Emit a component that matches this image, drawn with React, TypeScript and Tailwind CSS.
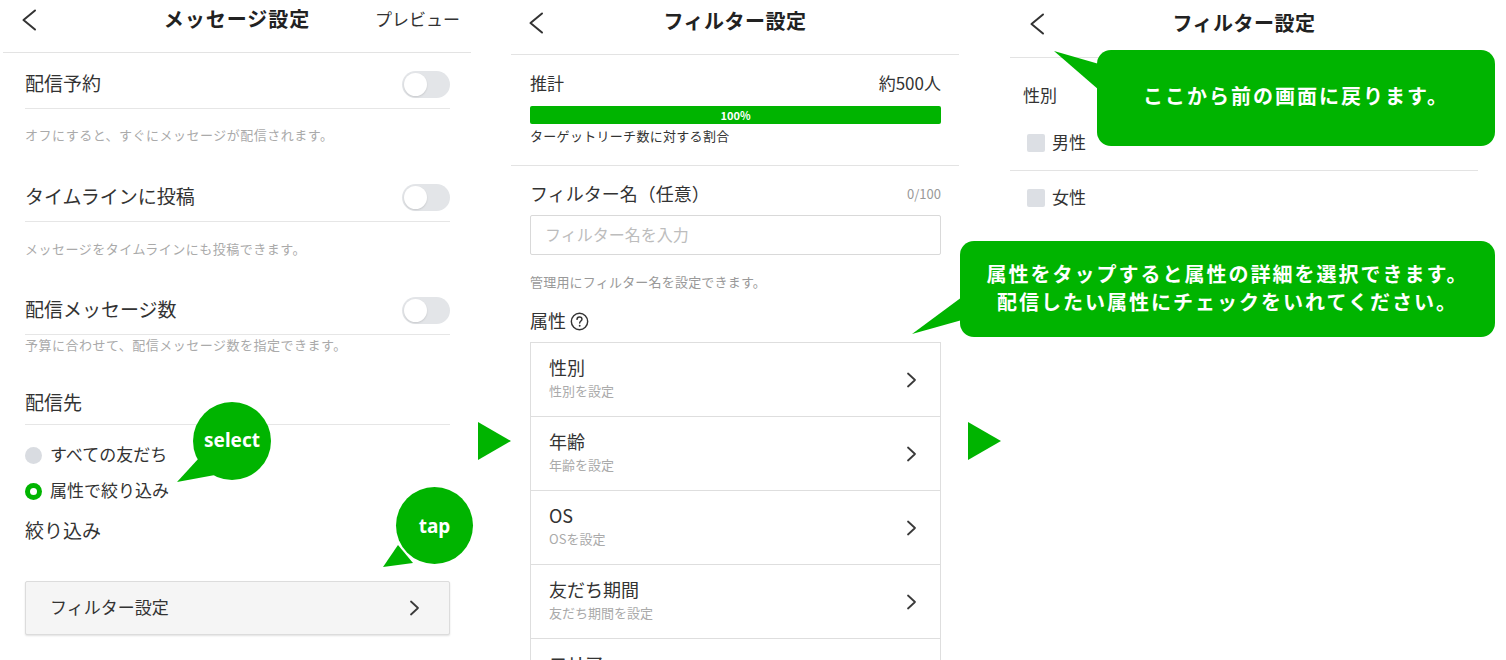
import React from 'react';

const Back = () => (
  <svg width="16" height="22" viewBox="0 0 16 22" className="block">
    <path d="M14 1.5 L2.5 11 L14 20.5" fill="none" stroke="#333" strokeWidth="2" strokeLinecap="round" strokeLinejoin="round" />
  </svg>
);

const Chevron = () => (
  <svg width="11" height="16" viewBox="0 0 11 16" className="block shrink-0">
    <path d="M2 1.5 L9 8 L2 14.5" fill="none" stroke="#3a3a3a" strokeWidth="1.8" strokeLinecap="round" strokeLinejoin="round" />
  </svg>
);

const Toggle = () => (
  <div className="flex h-[27px] w-[48px] items-center rounded-full bg-[#e3e5e8] px-[2px]">
    <div className="h-[23px] w-[23px] rounded-full bg-white shadow-[0_1px_2px_rgba(0,0,0,0.12)]" />
  </div>
);

const Arrow = () => (
  <svg width="33" height="38" viewBox="0 0 33 38" className="block">
    <polygon points="0,0 33,19 0,38" fill="#00b400" />
  </svg>
);

const HelpIcon = () => (
  <svg width="19" height="19" viewBox="0 0 20 20" className="block">
    <circle cx="10" cy="10" r="8.6" fill="none" stroke="#333" strokeWidth="1.5" />
    <path d="M7.4 7.8 C7.4 6.2 8.6 5.3 10 5.3 C11.5 5.3 12.6 6.3 12.6 7.6 C12.6 9.4 10.2 9.5 10.2 11.6" fill="none" stroke="#333" strokeWidth="1.5" strokeLinecap="round" />
    <circle cx="10.2" cy="14.4" r="1" fill="#333" />
  </svg>
);

const listItems: [string, string][] = [
  ['性別', '性別を設定'],
  ['年齢', '年齢を設定'],
  ['OS', 'OSを設定'],
  ['友だち期間', '友だち期間を設定'],
  ['エリア', 'エリアを設定'],
];

export default function App() {
  return (
    <div className="relative h-[660px] w-[1506px] overflow-hidden bg-white font-['Noto_Sans_CJK_JP','Noto_Sans',sans-serif] text-[#333]">
      <div className="flex items-start">
        {/* Left panel */}
        <div className="ml-[3px] w-[468px] shrink-0">
          <div className="grid h-[53px] grid-cols-[1fr_auto_1fr] items-start border-b border-[#e3e3e3] pt-[7px]">
            <div className="pl-[18px] pt-[2px]"><Back /></div>
            <div className="text-[20px] font-bold leading-[24px] tracking-[1px] text-[#222]">メッセージ設定</div>
            <div className="flex justify-end pr-[11px] text-[17px] leading-[24px] text-[#333]">プレビュー</div>
          </div>
          <div className="pl-[22px] pr-[21px]">
            <div className="mt-[8px] flex h-[48px] items-center justify-between border-b border-[#e6e6e6]">
              <span className="pb-[3px] text-[19px] leading-[26px]">配信予約</span>
              <Toggle />
            </div>
            <div className="mt-[16px] text-[13px] leading-[20px] tracking-[0.5px] text-[#aaa]">オフにすると、すぐにメッセージが配信されます。</div>
            <div className="mt-[29px] flex h-[48px] items-center justify-between border-b border-[#e6e6e6]">
              <span className="pb-[3px] text-[19px] leading-[26px]">タイムラインに投稿</span>
              <Toggle />
            </div>
            <div className="mt-[17px] text-[13px] leading-[20px] tracking-[0.5px] text-[#aaa]">メッセージをタイムラインにも投稿できます。</div>
            <div className="mt-[28px] flex h-[48px] items-center justify-between border-b border-[#e6e6e6]">
              <span className="pb-[3px] text-[19px] leading-[26px]">配信メッセージ数</span>
              <Toggle />
            </div>
            <div className="text-[13px] leading-[20px] tracking-[0.5px] text-[#aaa]">予算に合わせて、配信メッセージ数を指定できます。</div>
            <div className="mt-[22px] flex h-[48px] items-center border-b border-[#e6e6e6] pt-[3px]">
              <span className="text-[19px] leading-[26px]">配信先</span>
            </div>
            <div className="mt-[16px] flex h-[28px] items-center gap-[8px]">
              <div className="h-[17px] w-[17px] rounded-full bg-[#d9dce1]" />
              <span className="pb-[2px] text-[17px] leading-[24px]">すべての友だち</span>
            </div>
            <div className="mt-[8px] flex h-[28px] items-center gap-[8px]">
              <div className="flex h-[17px] w-[17px] items-center justify-center rounded-full bg-[#00b400]">
                <div className="h-[7px] w-[7px] rounded-full bg-white" />
              </div>
              <span className="pb-[2px] text-[17px] leading-[24px]">属性で絞り込み</span>
            </div>
            <div className="mt-[11px] text-[19px] leading-[28px]">絞り込み</div>
            <div className="mt-[37px] flex h-[54px] items-center justify-between rounded-[2px] border border-[#dcdcdc] bg-[#f5f5f5] pl-[24px] pr-[29px] shadow-[0_1px_2px_rgba(0,0,0,0.12)]">
              <span className="pb-[2px] text-[17px] leading-[24px]">フィルター設定</span>
              <Chevron />
            </div>
          </div>
        </div>

        <div className="ml-[7px] mt-[422px] shrink-0"><Arrow /></div>

        {/* Middle panel */}
        <div className="w-[448px] shrink-0">
          <div className="grid h-[55px] grid-cols-[1fr_auto_1fr] items-start border-b border-[#e3e3e3] pt-[9px]">
            <div className="pl-[17px] pt-[3px]"><Back /></div>
            <div className="text-[20px] font-bold leading-[24px] tracking-[0.5px] text-[#222]">フィルター設定</div>
            <div />
          </div>
          <div className="border-b border-[#e3e3e3] pb-[19px] pl-[19px] pr-[18px]">
            <div className="mt-[16px] flex items-center justify-between text-[17px] leading-[24px]">
              <span>推計</span>
              <span>約500人</span>
            </div>
            <div className="mt-[11px] flex h-[18px] items-center justify-center rounded-[2px] bg-[#00b400] text-[11px] font-semibold leading-[18px] text-white">100%</div>
            <div className="mt-[2px] text-[13px] leading-[20px] tracking-[0.3px]">ターゲットリーチ数に対する割合</div>
          </div>
          <div className="pl-[19px] pr-[18px]">
            <div className="mt-[14px] flex items-end justify-between">
              <span className="text-[18px] leading-[26px]">フィルター名（任意）</span>
              <span className="pb-[4px] text-[13px] leading-[16px] text-[#999]">0/100</span>
            </div>
            <div className="mt-[9px] flex h-[40px] items-center rounded-[2px] border border-[#d9d9d9] pb-[2px] pl-[14px] text-[16px] text-[#bdbdbd]">フィルター名を入力</div>
            <div className="mt-[17px] text-[13px] leading-[20px] tracking-[0.2px] text-[#999]">管理用にフィルター名を設定できます。</div>
            <div className="mt-[15px] flex items-center gap-[4px]">
              <span className="pb-[2px] text-[18px] leading-[26px]">属性</span>
              <HelpIcon />
            </div>
            <div className="mt-[7px] border-x border-t border-[#dedede]">
              {listItems.map(([t, s]) => (
                <div key={t} className="flex h-[74px] items-center justify-between border-b border-[#dedede] pl-[18px] pr-[23px]">
                  <div className="flex flex-col pb-[5px]">
                    <span className="text-[18px] leading-[24px]">{t}</span>
                    <span className="mt-[3px] text-[13px] leading-[18px] text-[#aaa]">{s}</span>
                  </div>
                  <Chevron />
                </div>
              ))}
            </div>
          </div>
        </div>

        <div className="ml-[9px] mt-[422px] shrink-0"><Arrow /></div>

        {/* Right panel */}
        <div className="ml-[9px] w-[468px] shrink-0">
          <div className="grid h-[58px] grid-cols-[1fr_auto_1fr] items-start border-b border-[#e3e3e3] pt-[11px]">
            <div className="pl-[19px] pt-[2px]"><Back /></div>
            <div className="text-[20px] font-bold leading-[24px] tracking-[0.5px] text-[#222]">フィルター設定</div>
            <div />
          </div>
          <div className="mt-[25px] pl-[13px] text-[17px] leading-[24px]">性別</div>
          <div className="mt-[22px] flex h-[42px] items-start gap-[7px] border-b border-[#e3e3e3] pl-[17px]">
            <div className="mt-[5px] h-[18px] w-[18px] rounded-[2px] bg-[#dcdfe4]" />
            <span className="text-[17px] leading-[26px]">男性</span>
          </div>
          <div className="mt-[13px] flex h-[28px] items-center gap-[7px] pl-[17px]">
            <div className="h-[18px] w-[18px] rounded-[2px] bg-[#dcdfe4]" />
            <span className="pb-[2px] text-[17px] leading-[26px]">女性</span>
          </div>
        </div>
      </div>

      {/* select bubble */}
      <div className="absolute left-[175px] top-[402px] h-[82px] w-[96px]">
        <svg width="96" height="82" viewBox="0 0 96 82" className="absolute left-0 top-0">
          <circle cx="57" cy="39" r="39" fill="#00b400" />
          <polygon points="2,80 24,56 40,73" fill="#00b400" />
        </svg>
        <div className="absolute left-[18px] top-0 flex h-[78px] w-[78px] items-center justify-center pb-[2px] font-['Noto_Sans',sans-serif] text-[19px] font-bold text-white">select</div>
      </div>

      {/* tap bubble */}
      <div className="absolute left-[381px] top-[487px] h-[82px] w-[93px]">
        <svg width="93" height="82" viewBox="0 0 93 82" className="absolute left-0 top-0">
          <circle cx="53.5" cy="38.5" r="38.5" fill="#00b400" />
          <polygon points="2,80 17,58 32,76" fill="#00b400" />
        </svg>
        <div className="absolute left-[15px] top-0 flex h-[77px] w-[77px] items-center justify-center pt-[1px] font-['Noto_Sans',sans-serif] text-[19px] font-bold text-white">tap</div>
      </div>

      {/* callout 1 */}
      <div className="absolute left-[1097px] top-[50px] flex h-[96px] w-[398px] items-center justify-center rounded-[14px] bg-[#00b400] pb-[5px] text-[20px] font-bold tracking-[2px] text-white">
        <svg width="46" height="42" viewBox="0 0 46 42" className="absolute left-[-44px] top-0">
          <polygon points="1,1 46,14 46,40" fill="#00b400" />
        </svg>
        ここから前の画面に戻ります。
      </div>

      {/* callout 2 */}
      <div className="absolute left-[960px] top-[241px] flex h-[96px] w-[535px] flex-col items-center justify-center rounded-[14px] bg-[#00b400] pb-[3px] text-[20px] font-bold leading-[28px] tracking-[2px] text-white">
        <svg width="51" height="46" viewBox="0 0 51 46" className="absolute left-[-49px] top-[50px]">
          <polygon points="1,43 51,6 51,29" fill="#00b400" />
        </svg>
        <span>属性をタップすると属性の詳細を選択できます。</span>
        <span>配信したい属性にチェックをいれてください。</span>
      </div>
    </div>
  );
}
